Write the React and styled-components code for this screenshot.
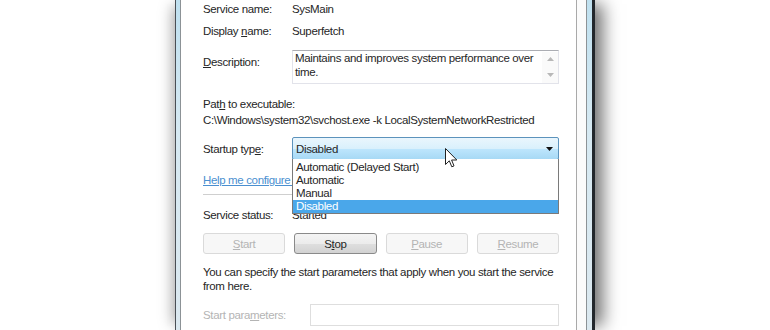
import React from "react";
import styled, { createGlobalStyle } from "styled-components";

const Global = createGlobalStyle`
  html, body {
    margin: 0;
    padding: 0;
    background: #fff;
  }
  body {
    font-family: "Liberation Sans", Arial, sans-serif;
    font-size: 11.5px;
    letter-spacing: -0.35px;
    color: #262626;
  }
`;

const Page = styled.div`
  height: 330px;
  overflow: hidden;
  display: flex;
  justify-content: center;
  background: #fff;
`;

const Frame = styled.div`
  width: 420px;
  flex-shrink: 0;
  box-sizing: border-box;
  display: flex;
  height: 330px;
  border-left: 1px solid #4a4f55;
  border-right: 3px solid #22272c;
  padding: 0 5px 0 4px;
  background: linear-gradient(to bottom, #bfe0ef, #d6e9f2 40%, #dbe8ef);
  box-shadow: 12px 0 16px -4px rgba(0, 0, 0, 0.55),
    -8px 0 14px -6px rgba(0, 0, 0, 0.35);
`;

const Dialog = styled.div`
  flex: 1;
  min-width: 0;
  display: flex;
  border-left: 1px solid #8c9296;
  border-right: 1px solid #8c9296;
  background: #fbfbfb;
  padding-right: 9px;
`;

const TabPage = styled.div`
  flex: 1;
  min-width: 0;
  overflow: hidden;
  display: flex;
  flex-direction: column;
  border-right: 1px solid #a9a9a9;
  background: #fff;
  padding: 2px 17px 0 22px;
  line-height: 14px;
`;

const Row = styled.div`
  display: flex;
  align-items: ${(p) => p.$align || "center"};
  margin-top: ${(p) => p.$mt || 0}px;
  position: relative;
`;

const Label = styled.div`
  width: ${(p) => p.$w || 89}px;
  flex-shrink: 0;
  padding-top: ${(p) => p.$pt || 0}px;
  color: ${(p) => (p.$disabled ? "#b4b4b4" : "inherit")};
`;

const Value = styled.div`
  flex: 1;
`;

const Line = styled.div`
  margin-top: ${(p) => p.$mt || 0}px;
  white-space: nowrap;
`;

const U = styled.span`
  text-decoration: underline;
  text-underline-offset: 1px;
`;

const TextArea = styled.div`
  flex: 1;
  height: 34px;
  box-sizing: border-box;
  display: flex;
  border: 1px solid #e2e3ea;
  border-top-color: #abadb3;
  padding: 1px 0 0 2px;
  line-height: 14px;
`;

const TextBody = styled.div`
  flex: 1;
  margin-top: -1px;
  white-space: nowrap;
`;

const ScrollBar = styled.div`
  width: 16px;
  display: flex;
  flex-direction: column;
  justify-content: space-between;
  align-items: center;
  padding: 5px 0 6px;
  background: #fafafa;
`;

const Select = styled.div`
  flex: 1;
  height: 23px;
  box-sizing: border-box;
  position: relative;
  display: flex;
  align-items: center;
  justify-content: space-between;
  padding: 0 5px 0 3px;
  border: 1px solid #5c93bc;
  border-radius: 2px;
  background: linear-gradient(
    to bottom,
    #eaf6fd 0%,
    #d9f0fc 50%,
    #bee6fd 51%,
    #a7d9f5 100%
  );
`;

const DropList = styled.div`
  position: absolute;
  left: -1px;
  right: -1px;
  top: 100%;
  padding-top: 2px;
  background: #fff;
  border: 1px solid #7a7a7a;
  border-top: none;
  z-index: 2;
`;

const Option = styled.div`
  height: 13px;
  line-height: 13px;
  padding-left: 3px;
  white-space: nowrap;
  background: ${(p) => (p.$selected ? "#4aa7ea" : "transparent")};
  color: ${(p) => (p.$selected ? "#fff" : "inherit")};
`;

const Link = styled.a`
  color: #4a8fd0;
  text-decoration: underline;
  white-space: nowrap;
`;

const Separator = styled.div`
  height: 1px;
  background: #cfcfcf;
  margin-top: 7px;
`;

const ButtonRow = styled.div`
  display: grid;
  grid-template-columns: repeat(4, 1fr);
  gap: 9px;
  margin-top: 11px;
`;

const Button = styled.div`
  height: 21px;
  box-sizing: border-box;
  display: flex;
  align-items: center;
  justify-content: center;
  border-radius: 3px;
  border: 1px solid ${(p) => (p.$disabled ? "#dadada" : "#8a8a8a")};
  color: ${(p) => (p.$disabled ? "#b4b4b4" : "#262626")};
  background: ${(p) =>
    p.$disabled
      ? "#f7f7f7"
      : "linear-gradient(to bottom, #f4f4f4 0%, #ececec 50%, #dfdfdf 51%, #d2d2d2 100%)"};
`;

const Paragraph = styled.div`
  margin-top: 11px;
  line-height: 14px;
  white-space: nowrap;
`;

const Input = styled.div`
  flex: 1;
  height: 22px;
  box-sizing: border-box;
  border: 1px solid #dedede;
  background: #fff;
`;

const Cursor = styled.svg`
  position: absolute;
  left: 445px;
  top: 148px;
  z-index: 5;
`;

const Wrap = styled.div`
  position: relative;
`;

const Arrow = ({ up }) => (
  <svg width="7" height="4" viewBox="0 0 7 4">
    <path d={up ? "M0 4 L3.5 0 L7 4 Z" : "M0 0 L3.5 4 L7 0 Z"} fill="#b8b8b8" />
  </svg>
);

export default function App() {
  return (
    <Wrap>
      <Global />
      <Page>
        <Frame>
          <Dialog>
            <TabPage>
              <Row>
                <Label>Service name:</Label>
                <Value>SysMain</Value>
              </Row>
              <Row $mt={8}>
                <Label>
                  Display <U>n</U>ame:
                </Label>
                <Value>Superfetch</Value>
              </Row>
              <Row $mt={12} $align="flex-start">
                <Label $pt={5}>
                  <U>D</U>escription:
                </Label>
                <TextArea>
                  <TextBody>
                    Maintains and improves system performance over
                    <br />
                    time.
                  </TextBody>
                  <ScrollBar>
                    <Arrow up />
                    <Arrow />
                  </ScrollBar>
                </TextArea>
              </Row>
              <Line $mt={13}>
                Pat<U>h</U> to executable:
              </Line>
              <Line $mt={2}>
                C:\Windows\system32\svchost.exe -k LocalSystemNetworkRestricted
              </Line>
              <Row $mt={10}>
                <Label>
                  Startup typ<U>e</U>:
                </Label>
                <Select>
                  <span>Disabled</span>
                  <svg width="7" height="4" viewBox="0 0 7 4">
                    <path d="M0 0 L7 0 L3.5 4 Z" fill="#111" />
                  </svg>
                  <DropList>
                    <Option>Automatic (Delayed Start)</Option>
                    <Option>Automatic</Option>
                    <Option>Manual</Option>
                    <Option $selected>Disabled</Option>
                  </DropList>
                </Select>
              </Row>
              <Line $mt={13}>
                <Link>Help me configure service startup options.</Link>
              </Line>
              <Separator />
              <Row $mt={13}>
                <Label>Service status:</Label>
                <Value>Started</Value>
              </Row>
              <ButtonRow>
                <Button $disabled>
                  <span>
                    <U>S</U>tart
                  </span>
                </Button>
                <Button>
                  <span>
                    S<U>t</U>op
                  </span>
                </Button>
                <Button $disabled>
                  <span>
                    <U>P</U>ause
                  </span>
                </Button>
                <Button $disabled>
                  <span>
                    <U>R</U>esume
                  </span>
                </Button>
              </ButtonRow>
              <Paragraph>
                You can specify the start parameters that apply when you start the service
                <br />
                from here.
              </Paragraph>
              <Row $mt={11}>
                <Label $w={107} $disabled>
                  Start para<U>m</U>eters:
                </Label>
                <Input />
              </Row>
            </TabPage>
          </Dialog>
        </Frame>
      </Page>
      <Cursor width="13" height="21" viewBox="0 0 13 21">
        <path
          d="M0.5 0.5 L0.5 16.5 L4.3 12.8 L6.8 18.8 L9 17.9 L6.6 12 L11.8 12 Z"
          fill="#fff"
          stroke="#222"
          strokeWidth="1"
          strokeLinejoin="round"
        />
      </Cursor>
    </Wrap>
  );
}
